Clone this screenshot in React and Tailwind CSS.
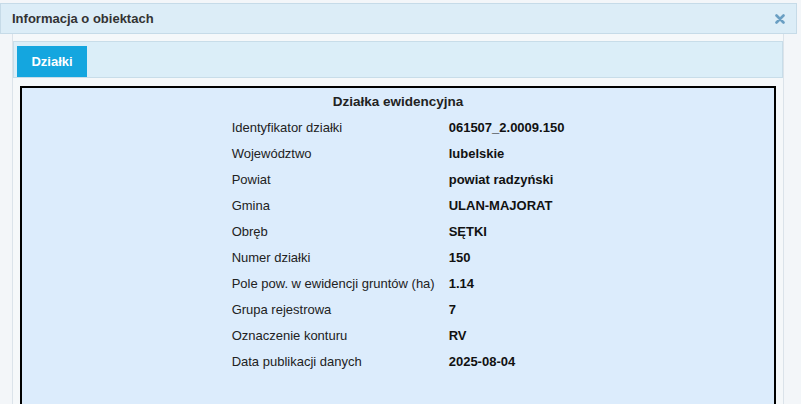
import React from "react";

const rows = [
  ["Identyfikator działki", "061507_2.0009.150"],
  ["Województwo", "lubelskie"],
  ["Powiat", "powiat radzyński"],
  ["Gmina", "ULAN-MAJORAT"],
  ["Obręb", "SĘTKI"],
  ["Numer działki", "150"],
  ["Pole pow. w ewidencji gruntów (ha)", "1.14"],
  ["Grupa rejestrowa", "7"],
  ["Oznaczenie konturu", "RV"],
  ["Data publikacji danych", "2025-08-04"],
];

export default function App() {
  return (
    <div
      className="w-[801px] h-[404px] overflow-hidden bg-[#f3f6f9] pt-[3px] text-[#222]"
      style={{ fontFamily: '"Liberation Sans", Arial, sans-serif' }}
    >
      {/* window header */}
      <div className="w-[797px] h-[31px] flex items-center justify-between pl-[11px] pr-[10px] bg-[#dcedf7] border border-[#c6dbe8]">
        <span className="text-[13px] font-bold text-[#333]">Informacja o obiektach</span>
        <svg width="10" height="10" viewBox="0 0 10 10" className="mr-[1px]">
          <path d="M1.5 1.5 L8.5 8.5 M8.5 1.5 L1.5 8.5" stroke="#6a9fc3" strokeWidth="2.6" strokeLinecap="round" />
        </svg>
      </div>

      {/* panel */}
      <div className="ml-[12px] w-[772px] h-[400px] border-l border-r border-[#dbe3ea] bg-[#f5f8fa] pt-[7px]">
        <div className="h-[37px] bg-[#dbeef8] border border-[#c8dde9] flex items-end pl-[3px]">
          <div className="w-[70px] h-[31px] bg-[#14a6df] text-white text-[13px] font-bold flex items-center justify-center">
            Działki
          </div>
        </div>

        <div className="mt-[8px] ml-[7px] w-[756px] h-[330px] border-2 border-black bg-[#dcecfc] pt-[4px]">
          <table className="mx-auto text-[13px] border-separate border-spacing-0">
            <thead>
              <tr>
                <th colSpan={2} className="text-center font-bold text-[13.5px] h-[19px] pb-[2px]">
                  Działka ewidencyjna
                </th>
              </tr>
            </thead>
            <tbody>
              {rows.map(([label, value]) => (
                <tr key={label} className="h-[26px]">
                  <td className="pr-[14px] text-[#222]">{label}</td>
                  <td className="font-bold text-[#111]">{value}</td>
                </tr>
              ))}
            </tbody>
          </table>
        </div>
      </div>
    </div>
  );
}
